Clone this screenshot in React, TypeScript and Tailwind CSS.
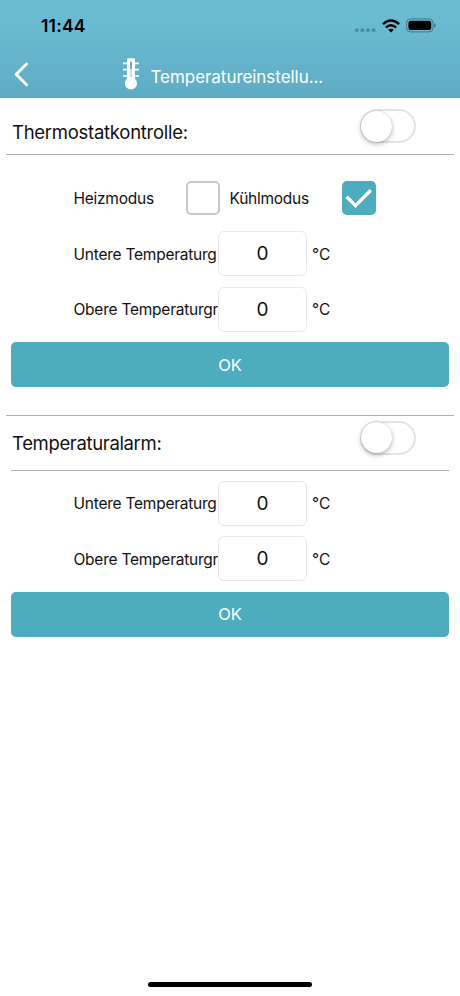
import { useState } from 'react';

function Toggle({ on, onChange }: { on: boolean; onChange: () => void }) {
  return (
    <button
      type="button"
      role="switch"
      aria-checked={on}
      onClick={onChange}
      className={`flex h-[34px] w-14 items-center rounded-full border-2 border-[#e4e4e4] ${on ? 'justify-end bg-[#4dacbd]' : 'bg-white'}`}
    >
      <span className="-ml-px size-[31px] shrink-0 rounded-full bg-white shadow-[0_2px_5px_rgba(0,0,0,0.28),0_0_1px_rgba(0,0,0,0.2)]"></span>
    </button>
  );
}

function Checkbox({ checked, onChange }: { checked: boolean; onChange: () => void }) {
  return (
    <button
      type="button"
      role="checkbox"
      aria-checked={checked}
      onClick={onChange}
      className={`flex size-[34px] shrink-0 items-center justify-center rounded-[5px] ${checked ? 'bg-[#4dacbd]' : 'border-2 border-[#c8c8c8] bg-white'}`}
    >
      {checked && (
        <svg width="34" height="34" viewBox="0 0 34 34" fill="none" stroke="white" strokeWidth="3.4">
          <path d="M4.6 15.8 L13.5 24.6 L28.8 9.2" />
        </svg>
      )}
    </button>
  );
}

function LimitRow({ label }: { label: string }) {
  const [value, setValue] = useState('0');

  return (
    <div className="flex h-[45px] items-center pl-[73.5px]">
      <span className="w-[144.5px] overflow-hidden pt-0.5 text-[15.5px] tracking-[-0.24px] whitespace-nowrap">{label}</span>
      <input
        value={value}
        onChange={(e) => setValue(e.target.value)}
        className="h-[45px] w-[89px] rounded-md border border-[#e8e8e8] bg-white text-center text-[19px]"
      />
      <span className="ml-[5px] pt-0.5 text-[15.5px]">°C</span>
    </div>
  );
}

function OkButton() {
  return (
    <button type="button" className="mx-[11px] h-[45px] rounded-[5px] bg-[#4dacbd] pt-px text-[16.5px] tracking-[-0.2px] text-white">
      OK
    </button>
  );
}

export default function App() {
  const [thermostat, setThermostat] = useState(false);
  const [alarm, setAlarm] = useState(false);
  const [mode, setMode] = useState('cool');

  return (
    <div className="flex h-[996px] w-[460px] flex-col overflow-hidden bg-white font-['Inter',sans-serif] text-[#111]">
      {/* Header */}
      <header className="h-[98px] shrink-0 bg-linear-to-b from-[#6abad2] from-25% to-[#5eabc4]">
        <div className="flex h-[51px] items-center pr-6 pl-[41px] text-black">
          <span className="pt-0.5 text-[17.5px] font-semibold tracking-[0.2px]">11:44</span>
          <div className="ml-auto flex items-center">
            <svg width="22" height="14" viewBox="0 0 22 14" fill="#4b8b9e">
              <circle cx="2.8" cy="11.2" r="1.9" />
              <circle cx="8.4" cy="11.2" r="1.9" />
              <circle cx="14" cy="11.2" r="1.9" />
              <circle cx="19.6" cy="11.2" r="1.9" />
            </svg>
            <svg className="ml-1.5" width="18" height="14" viewBox="0 0 18 14" fill="none" stroke="black" strokeWidth="2.5">
              <path d="M0.9 5.2 Q9 -2.2 17.1 5.2" />
              <path d="M3.9 8.5 Q9 3.9 14.1 8.5" />
              <path d="M9 13.5 L6.3 10.8 Q9 8.6 11.7 10.8 Z" fill="black" stroke="none" />
            </svg>
            <svg className="ml-1.5" width="30" height="15" viewBox="0 0 30 15">
              <rect x="0.6" y="0.9" width="26.4" height="13" rx="4" fill="none" stroke="#437988" strokeWidth="1" />
              <rect x="2.4" y="2.7" width="22.8" height="9.4" rx="2.3" fill="black" />
              <path d="M28 5.2 Q29.7 5.8 29.7 7.4 T28 9.6 Z" fill="#437988" />
            </svg>
          </div>
        </div>
        <div className="flex h-[47px] items-center">
          <svg className="ml-3.5" width="16" height="28" viewBox="0 0 16 28" fill="none" stroke="white" strokeWidth="3" strokeLinecap="round" strokeLinejoin="round">
            <path d="M12.6 3 L2.2 13.2 L12.6 23.8" />
          </svg>
          <svg className="ml-[92px]" width="18" height="34" viewBox="0 0 18 34">
            <path d="M1 5.4 H17 M1 11.6 H17 M1 18 H17" stroke="white" strokeWidth="1.6" />
            <rect x="5" y="0.3" width="8" height="23" rx="0.8" fill="white" />
            <rect x="8" y="3.5" width="2" height="8" fill="#65b2ca" />
            <rect x="8" y="11.5" width="2" height="8" fill="#c6e1ea" />
            <circle cx="8.9" cy="25.4" r="6.1" fill="white" />
          </svg>
          <h1 className="mt-[7px] ml-[10.5px] text-[17px] tracking-[-0.05px] text-white">Temperatureinstellu...</h1>
        </div>
      </header>

      {/* Thermostat */}
      <section className="flex flex-col">
        <div className="mx-1.5 flex h-[57px] justify-between border-b border-[#b0b0b0] pt-[11px] pr-[38px] pl-1.5">
          <h2 className="mt-[9px] text-[18.5px] leading-7 tracking-[-0.27px]">Thermostatkontrolle:</h2>
          <Toggle on={thermostat} onChange={() => setThermostat(!thermostat)} />
        </div>
        <div className="mt-[26px] flex h-[34px] items-center pl-[73.5px] text-[15.5px] tracking-[-0.25px]">
          <span className="w-28 pt-px">Heizmodus</span>
          <Checkbox checked={mode === 'heat'} onChange={() => setMode('heat')} />
          <span className="ml-2.5 w-28 pt-px">Kühlmodus</span>
          <Checkbox checked={mode === 'cool'} onChange={() => setMode('cool')} />
        </div>
        <div className="mt-4 flex flex-col gap-[10.5px]">
          <LimitRow label="Untere Temperaturg" />
          <LimitRow label="Obere Temperaturgr" />
          <OkButton />
        </div>
      </section>

      {/* Alarm */}
      <section className="mt-[27.5px] flex flex-col">
        <div className="mx-1.5 border-t border-[#b0b0b0]">
          <div className="mx-[5px] flex h-[55px] justify-between border-b border-[#b0b0b0] pt-[5px] pr-[33px] pl-px">
            <h2 className="mt-2 text-[18.5px] leading-7 tracking-[-0.35px]">Temperaturalarm:</h2>
            <Toggle on={alarm} onChange={() => setAlarm(!alarm)} />
          </div>
        </div>
        <div className="mt-2.5 flex flex-col gap-[10.5px]">
          <LimitRow label="Untere Temperaturg" />
          <LimitRow label="Obere Temperaturgr" />
          <OkButton />
        </div>
      </section>

      {/* Home indicator */}
      <div className="mx-auto mt-auto mb-[9px] h-[5.5px] w-[164px] rounded-full bg-black"></div>
    </div>
  );
}
